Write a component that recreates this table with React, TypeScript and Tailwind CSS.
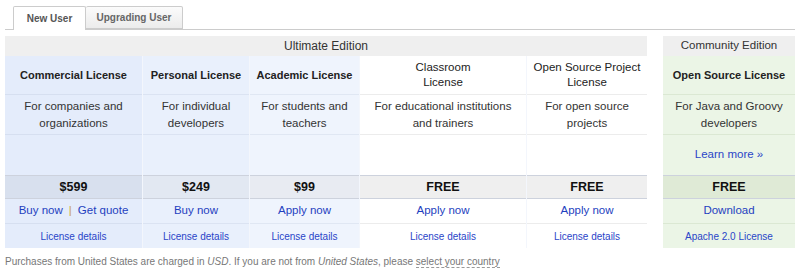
import React from "react";

type Col = {
  name: string[];
  bold: boolean;
  desc: string[];
  extra?: string;
  price: string;
  action: string[];
  details: string;
  bg: string;
  priceBg: string;
  line: string;
  w: string;
};

const ultimate: Col[] = [
  { name: ["Commercial License"], bold: true, desc: ["For companies and", "organizations"], price: "$599", action: ["Buy now", "Get quote"], details: "License details", bg: "bg-[#e4ecfb]", priceBg: "bg-[#d8e0ee]", line: "border-[#d6dff0]", w: "w-[137px]" },
  { name: ["Personal License"], bold: true, desc: ["For individual", "developers"], price: "$249", action: ["Buy now"], details: "License details", bg: "bg-[#e9f0fc]", priceBg: "bg-[#e2e8f2]", line: "border-[#dbe3f2]", w: "w-[107px]" },
  { name: ["Academic License"], bold: true, desc: ["For students and", "teachers"], price: "$99", action: ["Apply now"], details: "License details", bg: "bg-[#eff4fd]", priceBg: "bg-[#e8ebf2]", line: "border-[#e0e7f3]", w: "w-[110px]" },
  { name: ["Classroom", "License"], bold: false, desc: ["For educational institutions", "and trainers"], price: "FREE", action: ["Apply now"], details: "License details", bg: "bg-white", priceBg: "bg-[#efefef]", line: "border-[#ececec]", w: "w-[167px]" },
  { name: ["Open Source Project", "License"], bold: false, desc: ["For open source", "projects"], price: "FREE", action: ["Apply now"], details: "License details", bg: "bg-white", priceBg: "bg-[#efefef]", line: "border-[#ececec]", w: "w-[121px]" },
];

const community: Col = {
  name: ["Open Source License"], bold: true, desc: ["For Java and Groovy", "developers"], extra: "Learn more »", price: "FREE", action: ["Download"], details: "Apache 2.0 License", bg: "bg-[#ebf5e6]", priceBg: "bg-[#dfead6]", line: "border-[#dbe8d3]", w: "w-[132px]",
};

function Column({ c, first }: { c: Col; first?: boolean }) {
  return (
    <div className={`${c.w} ${c.bg} flex flex-col text-center ${first ? "" : "border-l border-[#f3f6fc]"}`}>
      <div className={`h-[39px] flex flex-col items-center justify-center border-b ${c.line} leading-[15px] text-[#222] ${c.bold ? "font-bold text-[11px]" : "text-[11.5px]"}`}>
        {c.name.map((n) => (
          <span key={n}>{n}</span>
        ))}
      </div>
      <div className={`h-[40px] flex flex-col items-center justify-center border-b ${c.line} text-[11.5px] leading-[17px] text-[#333]`}>
        {c.desc.map((d) => (
          <span key={d}>{d}</span>
        ))}
      </div>
      <div className="h-[40px] flex items-center justify-center text-[11.5px] text-[#2a45c8]">{c.extra}</div>
      <div className={`h-[24px] ${c.priceBg} border-y border-[#cdd2dd] flex items-center justify-center text-[12.5px] font-bold text-[#111]`}>{c.price}</div>
      <div className={`h-[25px] flex items-center justify-center border-b ${c.line} text-[11.5px] text-[#1f3fc0]`}>
        {c.action.map((a, i) => (
          <React.Fragment key={a}>
            {i > 0 && <span className="mx-[6px] text-[#c9a24a]">|</span>}
            <span>{a}</span>
          </React.Fragment>
        ))}
      </div>
      <div className="h-[24px] flex items-center justify-center text-[10px] text-[#2a45c8]">{c.details}</div>
    </div>
  );
}

export default function App() {
  return (
    <div className="w-[800px] h-[268px] bg-white font-['Liberation_Sans',Arial,sans-serif] overflow-hidden">
      <div className="pt-[6px] px-[5px]">
        <div className="flex pl-[8px] border-b border-[#cccccc] h-[24px]">
          <div className="w-[73px] h-[24px] bg-white border border-b-0 border-[#cccccc] rounded-t-[2px] flex items-center justify-center text-[10px] font-bold text-[#555] -mb-px">
            New User
          </div>
          <div className="w-[97px] h-[23px] bg-gradient-to-b from-[#fbfbfb] to-[#ececec] border border-l-0 border-[#cccccc] rounded-t-[2px] flex items-center justify-center text-[10px] font-bold text-[#666]">
            Upgrading User
          </div>
        </div>
        <div className="flex mt-[6px] gap-[16px]">
          <div className="w-[642px] flex flex-col">
            <div className="h-[20px] bg-[#efefef] flex items-center justify-center text-[12px] text-[#333]">Ultimate Edition</div>
            <div className="flex">
              {ultimate.map((c, i) => (
                <Column key={c.name.join()} c={c} first={i === 0} />
              ))}
            </div>
          </div>
          <div className="w-[132px] flex flex-col">
            <div className="h-[20px] bg-[#efefef] flex items-center justify-center text-[11.5px] text-[#333]">Community Edition</div>
            <Column c={community} first />
          </div>
        </div>
        <p className="mt-[6px] text-[10px] text-[#777]">
          Purchases from United States are charged in <i>USD</i>. If you are not from <i>United States</i>, please{" "}
          <span className="border-b border-dashed border-[#999]">select your country</span>
        </p>
      </div>
    </div>
  );
}
